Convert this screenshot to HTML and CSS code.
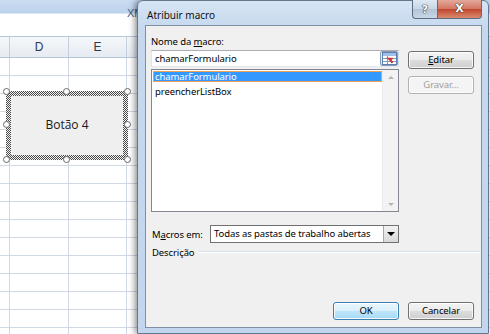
FILE: index.html
```html
<!DOCTYPE html>
<html lang="pt">
<head>
<meta charset="utf-8">
<title>Atribuir macro</title>
<link rel="stylesheet" href="styles.css">
</head>
<body>
<div class="sheet">
  <div class="xl-title"><span class="xl-title-text">XM</span></div>
  <div class="ribbon"></div>
  <div class="hdr-row">
    <div class="hc c0"></div><div class="hc cd">D</div><div class="hc ce">E</div><div class="hc cf"></div>
  </div>
  <div class="row"><div class="c c0"></div><div class="c cd"></div><div class="c ce"></div><div class="c cf"></div></div>
  <div class="row"><div class="c c0"></div><div class="c cd"></div><div class="c ce"></div><div class="c cf"></div></div>
  <div class="row"><div class="c c0"></div><div class="c cd"></div><div class="c ce"></div><div class="c cf"></div></div>
  <div class="row"><div class="c c0"></div><div class="c cd"></div><div class="c ce"></div><div class="c cf"></div></div>
  <div class="row"><div class="c c0"></div><div class="c cd"></div><div class="c ce"></div><div class="c cf"></div></div>
  <div class="row"><div class="c c0"></div><div class="c cd"></div><div class="c ce"></div><div class="c cf"></div></div>
  <div class="row"><div class="c c0"></div><div class="c cd"></div><div class="c ce"></div><div class="c cf"></div></div>
  <div class="row"><div class="c c0"></div><div class="c cd"></div><div class="c ce"></div><div class="c cf"></div></div>
  <div class="row"><div class="c c0"></div><div class="c cd"></div><div class="c ce"></div><div class="c cf"></div></div>
  <div class="row"><div class="c c0"></div><div class="c cd"></div><div class="c ce"></div><div class="c cf"></div></div>
  <div class="row"><div class="c c0"></div><div class="c cd"></div><div class="c ce"></div><div class="c cf"></div></div>
  <div class="row"><div class="c c0"></div><div class="c cd"></div><div class="c ce"></div><div class="c cf"></div></div>
  <div class="row"><div class="c c0"></div><div class="c cd"></div><div class="c ce"></div><div class="c cf"></div></div>
  <div class="row"><div class="c c0"></div><div class="c cd"></div><div class="c ce"></div><div class="c cf"></div></div>
  <div class="row"><div class="c c0"></div><div class="c cd"></div><div class="c ce"></div><div class="c cf"></div></div>
  <div class="row"><div class="c c0"></div><div class="c cd"></div><div class="c ce"></div><div class="c cf"></div></div>

  <div class="shape">
    <div class="shape-inner">Botão 4</div>
    <span class="handle h-tl"></span><span class="handle h-tm"></span><span class="handle h-tr"></span>
    <span class="handle h-ml"></span><span class="handle h-mr"></span>
    <span class="handle h-bl"></span><span class="handle h-bm"></span><span class="handle h-br"></span>
  </div>
</div>

<div class="dialog">
  <div class="titlebar">
    <span class="title">Atribuir macro</span>
    <div class="caption-btns">
      <div class="cap-btn help"><span class="glyph">?</span></div>
      <div class="cap-btn close"><span class="glyph">X</span></div>
    </div>
  </div>
  <div class="client">
    <div class="top">
      <div class="main-col">
        <div class="label">Nome da <u>m</u>acro:</div>
        <div class="input">
          <span class="input-text">chamarFormulario</span>
          <div class="ref-btn">
            <svg width="15" height="13" viewBox="0 0 15 13">
              <rect x="0.5" y="0.5" width="14" height="12" fill="#fff" stroke="#5a7fb5"/>
              <rect x="1" y="1" width="13" height="3" fill="#9fc0e8"/>
              <line x1="1" y1="6.5" x2="14" y2="6.5" stroke="#7d9dcc"/>
              <line x1="1" y1="9.5" x2="14" y2="9.5" stroke="#7d9dcc"/>
              <line x1="5.5" y1="4" x2="5.5" y2="12" stroke="#7d9dcc"/>
              <path d="M6 3 L12 8 L9 8 L9 11 L7 11 L7 8 Z" fill="#d2322d" transform="rotate(-35 9 7)"/>
            </svg>
          </div>
        </div>
        <div class="list">
          <div class="items">
            <div class="item selected">chamarFormulario</div>
            <div class="item">preencherListBox</div>
          </div>
          <div class="vscroll">
            <span class="arr up"></span>
            <span class="arr down"></span>
          </div>
        </div>
      </div>
      <div class="side-col">
        <div class="btn edit"><u>E</u>ditar</div>
        <div class="btn disabled">Gravar...</div>
      </div>
    </div>
    <div class="macros-row">
      <div class="macros-label">M<u>a</u>cros em:</div>
      <div class="combo">
        <span class="combo-text">Todas as pastas de trabalho abertas</span>
        <div class="combo-btn"><span class="tri"></span></div>
      </div>
    </div>
    <div class="desc-row">
      <span class="desc-label">Descrição</span>
      <span class="etch"></span>
    </div>
    <div class="spacer"></div>
    <div class="bottom-btns">
      <div class="btn default">OK</div>
      <div class="btn">Cancelar</div>
    </div>
  </div>
</div>
</body>
</html>
```
FILE: styles.css
```css
* { box-sizing: border-box; }
html, body { margin: 0; padding: 0; }
body {
  width: 490px;
  height: 334px;
  overflow: hidden;
  position: relative;
  background: #fff;
  font-family: "Noto Sans", "Open Sans", sans-serif;
}

/* ---------- spreadsheet background ---------- */
.sheet { width: 490px; height: 334px; position: relative; }
.xl-title {
  height: 13px;
  background: linear-gradient(#c9dcf2, #bcd2ec);
  position: relative;
  padding-left: 127px;
}
.xl-title-text {
  font-family: "Liberation Sans", sans-serif;
  font-size: 11px;
  line-height: 13px;
  color: #3d5a86;
}
.ribbon {
  height: 24px;
  background: #fff;
  border-top: 1px solid #dde7f3;
  border-bottom: 1px solid #b7c7da;
}
.hdr-row, .row { display: flex; }
.hdr-row { height: 21px; background: linear-gradient(#f5f7fa, #e6ebf2); border-bottom: 1px solid #b5c5d8; }
.row { height: 18px; }
.hc, .c { flex: none; }
.hc {
  border-right: 1px solid #c4cfdd;
  font-family: "Liberation Sans", sans-serif;
  font-size: 12px;
  color: #2b3a4d;
  text-align: center;
  line-height: 20px;
}
.c { border-right: 1px solid #d0d7e5; border-bottom: 1px solid #d0d7e5; }
.c0 { width: 10px; }
.cd { width: 59px; }
.ce { width: 58px; }
.cf { flex: 1; border-right: none; }

.shape {
  position: absolute;
  left: 6px;
  top: 91px;
  width: 122px;
  height: 69px;
  padding: 5px;
  background: repeating-conic-gradient(#4a4a4a 0 25%, #f2f2f2 0 50%) 0 0 / 2px 2px;
}
.shape-inner {
  width: 100%;
  height: 100%;
  background: #efefef;
  display: flex;
  align-items: center;
  justify-content: center;
  font-family: "Open Sans", sans-serif;
  font-size: 12px;
  color: #1a1a1a;
  padding-bottom: 2px;
}
.handle {
  position: absolute;
  width: 7px;
  height: 7px;
  border-radius: 50%;
  background: #fff;
  border: 1px solid #6a6a6a;
}
.h-tl { left: -3px; top: -3px; }
.h-tm { left: 57px; top: -3px; }
.h-tr { right: -3px; top: -3px; }
.h-ml { left: -3px; top: 30px; }
.h-mr { right: -3px; top: 30px; }
.h-bl { left: -3px; bottom: -3px; }
.h-bm { left: 57px; bottom: -3px; }
.h-br { right: -3px; bottom: -3px; }

/* ---------- dialog ---------- */
.dialog {
  position: absolute;
  left: 137px;
  top: 0;
  width: 352px;
  height: 334px;
  border: 1px solid #64778f;
  border-radius: 6px 6px 0 0;
  background: linear-gradient(#d6e4f4 0, #c5d8ee 30px, #c2d6ed 100%);
  padding: 0 6px 5px 7px;
  display: flex;
  flex-direction: column;
  box-shadow: -2px 0 6px rgba(0, 0, 0, 0.45);
  font-family: "Noto Sans", "Open Sans", sans-serif;
  font-size: 9.5px;
  letter-spacing: -0.1px;
  color: #000;
  white-space: nowrap;
}
.titlebar {
  height: 24px;
  flex: none;
  display: flex;
  align-items: flex-start;
}
.title {
  padding-left: 2px;
  padding-top: 6px;
  font-size: 10px;
  letter-spacing: 0;
  line-height: 16px;
  color: #111;
  flex: 1;
}
.caption-btns { display: flex; margin-top: -1px; }
.cap-btn {
  height: 19px;
  border: 1px solid #5d6c80;
  border-top: none;
  display: flex;
  align-items: center;
  justify-content: center;
}
.cap-btn .glyph {
  font-family: "DejaVu Sans", sans-serif;
  font-weight: bold;
  color: #fff;
  letter-spacing: 0;
  text-shadow: 0 0 1px #333, 0 0 1px #333, 0 0 1px #333;
}
.help {
  width: 25px;
  border-radius: 0 0 0 4px;
  border-right: none;
  background: linear-gradient(#dfe8f2, #c7d5e4 50%, #b3c4d7 51%, #c9d7e6);
}
.help .glyph { font-size: 11px; }
.close {
  width: 45px;
  border-radius: 0 0 4px 0;
  background: linear-gradient(#e3a99b, #d37563 50%, #c2452e 51%, #d98b6f);
}
.close .glyph { font-size: 11px; line-height: 12px; }

.client {
  flex: 1;
  background: #f1f0f1;
  border: 1px solid #7f8fa3;
  padding: 8px 7px 7px 5px;
  display: flex;
  flex-direction: column;
}
.top { display: flex; gap: 9px; }
.main-col { width: 248px; display: flex; flex-direction: column; }
.label { height: 16px; line-height: 15px; }
u { text-decoration: underline; text-underline-offset: 1px; }

.input {
  height: 17px;
  border: 1px solid #abadb3;
  border-left-color: #e2e3ea;
  border-right-color: #dbdfe6;
  border-bottom-color: #e3e9ef;
  background: #fff;
  display: flex;
  align-items: center;
  padding-left: 3px;
}
.input-text { flex: 1; line-height: 15px; }
.ref-btn {
  width: 18px;
  height: 15px;
  border: 1px solid #8c9db3;
  border-radius: 2px;
  background: linear-gradient(#f4f7fb, #d9e2ed);
  display: flex;
  align-items: center;
  justify-content: center;
}
.ref-btn svg { display: block; }

.list {
  margin-top: 2px;
  height: 143px;
  border: 1px solid #828790;
  background: #fff;
  display: flex;
}
.items { flex: 1; padding: 1px 0 0 1px; }
.item { height: 11px; line-height: 11px; padding-left: 2px; margin-bottom: 4px; }
.item.selected {
  background: #3399ff;
  color: #fff;
  outline: 1px solid #f0a050;
  outline-offset: -1px;
}
.vscroll {
  width: 16px;
  background: #f3f3f3;
  border-left: 1px solid #ececec;
  display: flex;
  flex-direction: column;
  justify-content: space-between;
  align-items: center;
  padding: 6px 0 5px;
}
.arr { width: 0; height: 0; border-left: 3px solid transparent; border-right: 3px solid transparent; }
.arr.up { border-bottom: 3px solid #b6b6b6; }
.arr.down { border-top: 3px solid #b6b6b6; }

.side-col { display: flex; flex-direction: column; padding-top: 17px; gap: 7px; }
.btn {
  width: 66px;
  height: 18px;
  border: 1px solid #707070;
  border-radius: 3px;
  background: linear-gradient(#f3f3f3, #ebebeb 50%, #dddddd 51%, #cfcfcf);
  display: flex;
  align-items: center;
  justify-content: center;
  line-height: 14px;
  box-shadow: inset 0 0 0 1px rgba(255, 255, 255, 0.8);
}
.btn.disabled {
  border-color: #adb2b5;
  background: #f4f4f4;
  color: #a0a0a0;
}
.btn.default {
  border-color: #3c7fb1;
  background: linear-gradient(#eaf6fd, #d9f0fc 50%, #bee6fd 51%, #a7d9f5);
}

.macros-row { display: flex; align-items: center; margin-top: 13px; height: 18px; }
.macros-label { width: 59px; padding-left: 1px; }
.combo {
  width: 189px;
  height: 18px;
  border: 1px solid #707070;
  background: #fff;
  display: flex;
  align-items: center;
  padding-left: 3px;
}
.combo-text { flex: 1; line-height: 14px; }
.combo-btn {
  width: 15px;
  height: 16px;
  border-left: 1px solid #a8a8a8;
  background: linear-gradient(#f2f2f2, #d9d9d9);
  display: flex;
  align-items: center;
  justify-content: center;
}
.tri { width: 0; height: 0; border-left: 4px solid transparent; border-right: 4px solid transparent; border-top: 4px solid #000; }

.desc-row { display: flex; align-items: center; margin-top: 2px; height: 14px; padding-left: 1px; }
.desc-label { padding-right: 4px; }
.etch { flex: 1; height: 2px; border-top: 1px solid #d5dfe5; border-bottom: 1px solid #fff; margin-right: -6px; }
.spacer { flex: 1; }
.bottom-btns { display: flex; justify-content: flex-end; gap: 9px; }
```
